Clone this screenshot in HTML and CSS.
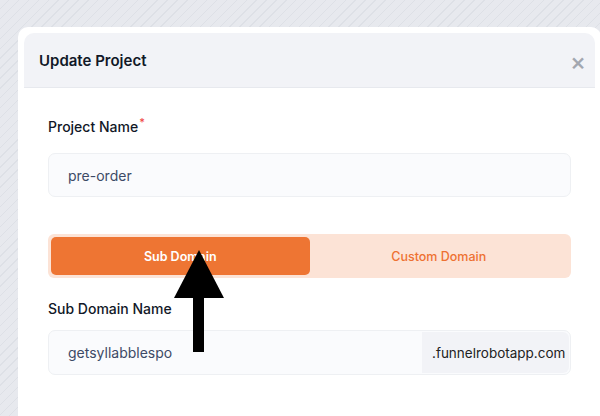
FILE: index.html
```html
<!DOCTYPE html>
<html lang="en">
<head>
    <meta charset="UTF-8">
    <meta name="viewport" content="width=device-width, initial-scale=1.0">
    <title>Update Project</title>
    <link rel="stylesheet" href="styles.css">
</head>
<body>
    <div class="modal">
        <div class="modal-header">
            <h2>Update Project</h2>
            <span class="close">&times;</span>
        </div>
        <div class="modal-body">
            <label class="field-label">Project Name<sup>*</sup></label>
            <div class="input">pre-order</div>

            <div class="toggle">
                <button class="toggle-btn active">Sub Domain</button>
                <button class="toggle-btn">Custom Domain</button>
            </div>

            <label class="field-label small-gap">Sub Domain Name</label>
            <div class="input-group">
                <div class="input-text">getsyllabblespo</div>
                <div class="addon">.funnelrobotapp.com</div>
            </div>
        </div>
    </div>

    <!-- annotation arrow -->
    <svg class="arrow" width="60" height="110" viewBox="0 0 60 110">
        <polygon points="25,0 0,48 50,48" fill="#000"/>
        <rect x="19" y="46" width="11" height="56" fill="#000"/>
    </svg>
</body>
</html>
```

FILE: styles.css
```css
html, body {
    margin: 0;
    height: 100%;
    overflow: hidden;
}
body {
    font-family: Inter, "Noto Sans", sans-serif;
    background-color: #e7e9ee;
    background-image: repeating-linear-gradient(135deg, #e7e9ee 0 6px, #dde0e6 6px 7px);
    padding: 27px 0 0 18px;
    box-sizing: border-box;
    position: relative;
}
.modal {
    width: 583px;
    height: 389px;
    background: #fff;
    border-radius: 10px 10px 0 0;
    padding: 6px;
    box-sizing: border-box;
}
.modal-header {
    display: flex;
    align-items: center;
    justify-content: space-between;
    height: 54px;
    padding: 0 15px;
    background: #f2f3f7;
    border-bottom: 1px solid #e7e9ee;
    border-radius: 10px 10px 0 0;
}
.modal-header h2 {
    margin: 0;
    font-size: 15px;
    font-weight: 600;
    color: #111827;
}
.close {
    color: #a3a7b0;
    font-size: 24px;
    font-weight: 500;
    line-height: 1;
    margin-right: -6px;
    margin-top: 4px;
}
.modal-body {
    padding: 29px 24px 0;
    display: flex;
    flex-direction: column;
}
.field-label {
    font-size: 14px;
    font-weight: 500;
    color: #111827;
    line-height: 20px;
    margin-bottom: 16px;
}
.field-label sup {
    color: #ef4444;
    font-size: 11px;
    line-height: 0;
    margin-left: 1px;
}
.field-label.small-gap {
    margin-bottom: 11px;
}
.input {
    height: 44px;
    box-sizing: border-box;
    background: #fafbfd;
    border: 1px solid #eef0f3;
    border-radius: 7px;
    padding: 0 19px;
    display: flex;
    align-items: center;
    font-size: 14px;
    color: #3d4a66;
}
.toggle {
    margin-top: 37px;
    height: 44px;
    box-sizing: border-box;
    background: #fce3d6;
    border-radius: 6px;
    padding: 3px;
    display: flex;
    margin-bottom: 21px;
}
.toggle-btn {
    flex: 1;
    border: none;
    background: transparent;
    border-radius: 5px;
    font-family: inherit;
    font-size: 12.5px;
    font-weight: 500;
    color: #ee7132;
}
.toggle-btn.active {
    background: #ee7533;
    color: #fff;
    font-weight: 600;
}
.input-group {
    height: 45px;
    box-sizing: border-box;
    background: #fafbfd;
    border: 1px solid #eef0f3;
    border-radius: 7px;
    display: flex;
    padding: 1px;
}
.input-text {
    flex: 1;
    display: flex;
    align-items: center;
    padding: 0 18px;
    font-size: 14px;
    color: #3d4a66;
}
.addon {
    width: 147px;
    box-sizing: border-box;
    background: #f2f3f7;
    border-radius: 0 6px 6px 0;
    display: flex;
    align-items: center;
    padding-left: 10px;
    font-size: 13.5px;
    color: #222;
}
.arrow {
    position: absolute;
    left: 174px;
    top: 250px;
}
```
